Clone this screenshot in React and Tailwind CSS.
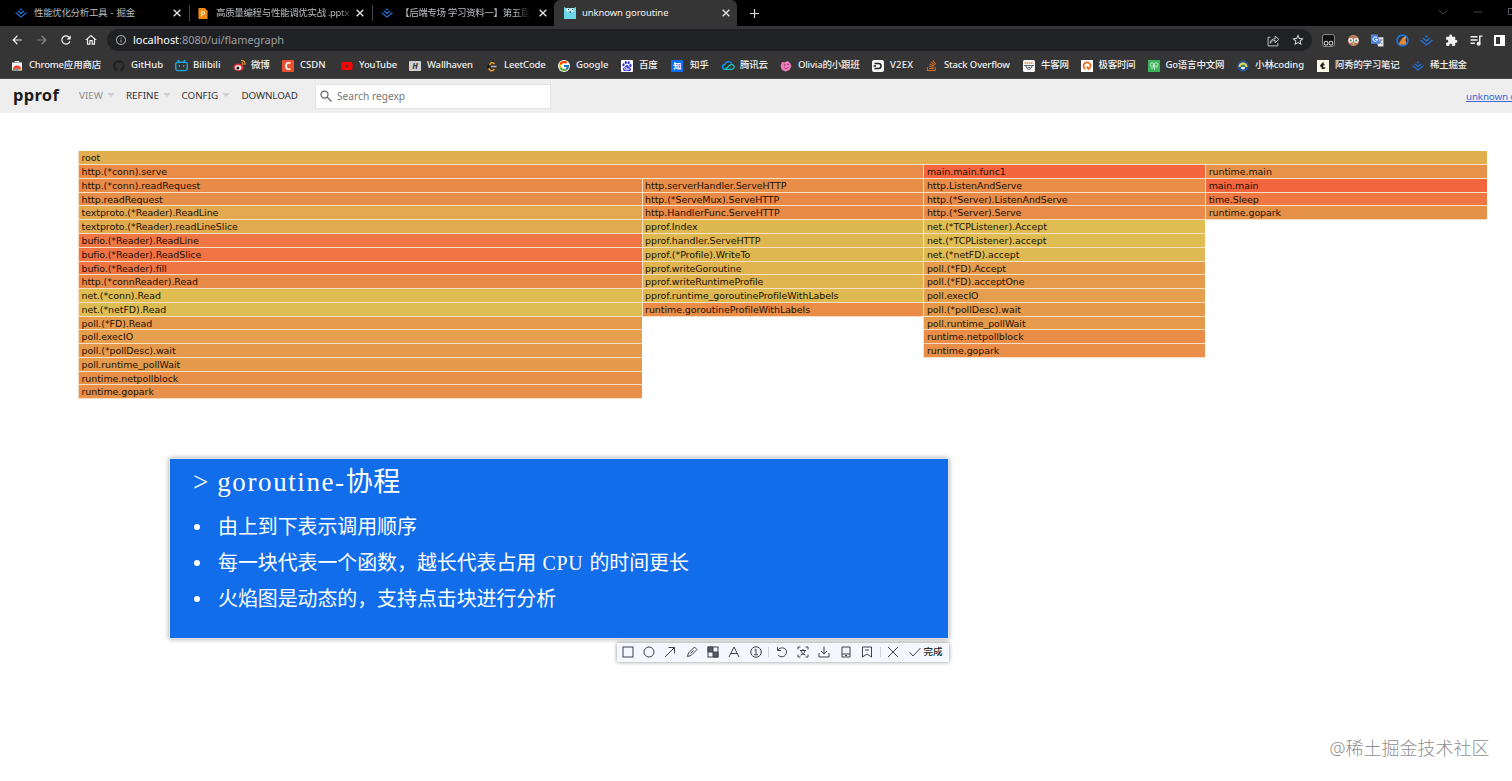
import React from "react";
import { MdArrowBack, MdArrowForward, MdExtension, MdInfoOutline, MdOutlineHome, MdRefresh, MdStarOutline } from "react-icons/md";
import { SiBaidu, SiBilibili, SiJuejin, SiStackoverflow } from "react-icons/si";
import { FaGithub, FaYoutube } from "react-icons/fa";
import { FcGoogle } from "react-icons/fc";

const Svg = ({ children, className = "size-3 shrink-0", w = 1.6 }) => (
  <svg viewBox="0 0 24 24" className={className} fill="none" stroke="currentColor" strokeWidth={w}>
    {children}
  </svg>
);

const Close = () => (
  <Svg className="size-[10px] shrink-0 text-[#e4e4e4]" w={3.2}>
    <path d="M4 4l16 16M20 4L4 20" />
  </Svg>
);

const ChromeStore = () => (
  <svg viewBox="0 0 24 24" className="size-3">
    <path d="M2 5h20v16H2z" fill="#f1f3f4" />
    <path d="M8 5V3h8v2" stroke="#f1f3f4" strokeWidth="2" fill="none" />
    <path d="M4 21a8 8 0 0 1 16 0z" fill="#fbc02d" />
    <path d="M4 19a8 8 0 0 1 16 0l-8-2z" fill="#ea4335" />
    <path d="M4 21a8 8 0 0 1 1-4l5 4z" fill="#34a853" />
    <path d="M8.5 21a3.5 3.5 0 0 1 7 0z" fill="#4285f4" />
  </svg>
);

const Weibo = () => (
  <svg viewBox="0 0 24 24" className="size-[13px]">
    <ellipse cx="10" cy="15.5" rx="9.5" ry="7" fill="#df2a2e" />
    <ellipse cx="9.5" cy="16" rx="6" ry="4.5" fill="#fff" />
    <circle cx="9" cy="16.5" r="2.8" fill="#111" />
    <path d="M15 3c5-1 8 3 7 8M16 7c2 0 3 1 2 4" stroke="#f09a22" strokeWidth="2.2" fill="none" />
  </svg>
);

const Leetcode = () => (
  <Svg className="size-3" w={3}>
    <path d="M15 2L5 12c-2 2-1 4 0 5" stroke="#111" />
    <path d="M5 17l4 4c2 1 4 1 6-1l2-2M17 8l-2-2c-2-1-4-1-5 0l-3 4" stroke="#f0a02a" />
    <path d="M10 13h11" stroke="#b5b5b5" />
  </Svg>
);

const Tencent = () => (
  <Svg className="size-[13px]" w={2.4}>
    <path d="M6 19a4.5 4.5 0 0 1-.5-9A7 7 0 0 1 18 8" stroke="#00a3ff" />
    <path d="M6 19l9-8a4.5 4.5 0 1 1 3 8z" stroke="#16c5c0" />
  </Svg>
);

const Olivia = () => (
  <svg viewBox="0 0 24 24" className="size-3">
    <path d="M4 4l5 1 6-3 5 4 3 6-4 8-8 3-7-3-3-8z" fill="#f07bbd" />
    <circle cx="9" cy="10" r="1.6" fill="#8d2f68" />
    <circle cx="16" cy="9" r="1.6" fill="#8d2f68" />
    <path d="M8 15c3 3 7 2 9-1" stroke="#8d2f68" strokeWidth="1.5" fill="none" />
  </svg>
);

const V2ex = () => (
  <svg viewBox="0 0 24 24" className="size-3">
    <rect width="24" height="24" rx="4" fill="#f4f4f4" />
    <path d="M5 7h8a5 5 0 0 1 0 10H5M3 12h5" stroke="#222" strokeWidth="3" fill="none" />
  </svg>
);

const Nowcoder = () => (
  <svg viewBox="0 0 24 24" className="size-3">
    <rect width="24" height="24" rx="3" fill="#f6f6f6" />
    <path d="M3 6h18" stroke="#e38b52" strokeWidth="3" strokeDasharray="3 1" />
    <path d="M2 11h20M6 11c0 10 12 10 12 0M9 15h6" stroke="#5b6570" strokeWidth="2" fill="none" />
  </svg>
);

const Geek = () => (
  <svg viewBox="0 0 24 24" className="size-3">
    <rect width="24" height="24" fill="#fff" />
    <path d="M9 18a7 7 0 1 1 6 0l-3-5" stroke="#f0681e" strokeWidth="3.5" fill="none" />
  </svg>
);

const GoCn = () => (
  <svg viewBox="0 0 24 24" className="size-3">
    <rect width="24" height="24" fill="#3bb45c" />
    <g stroke="#d9f5df" strokeWidth="1.6" fill="none">
      <circle cx="8" cy="9" r="3.5" />
      <circle cx="16" cy="9" r="3.5" />
      <path d="M11 9v5c0 3-5 3-6 1M13 9v11M16 14h4" />
    </g>
  </svg>
);

const Xiaolin = () => (
  <svg viewBox="0 0 24 24" className="size-3">
    <circle cx="12" cy="12" r="11.5" fill="#2a4f94" />
    <path d="M3 14a9 9 0 0 1 18 0z" fill="#e8d44a" />
    <path d="M7 14a5 5 0 0 1 10 0z" fill="#2f8a6d" />
    <path d="M8 14h8v3q-4 4-8 0z" fill="#dfe8f2" />
  </svg>
);

const Axiu = () => (
  <svg viewBox="0 0 24 24" className="size-3">
    <rect width="24" height="24" fill="#fbfae6" />
    <path d="M14 4c-5 1-8 6-8 9l3 1v3c3 3 7 1 8-2l-5-1 1-3 4-1-4-2z" fill="#222" />
  </svg>
);

function Letter({ bg, children }) {
  return (
    <span className={`flex size-3 items-center justify-center rounded-[1px] text-[10px] leading-none font-bold text-white ${bg}`}>
      {children}
    </span>
  );
}

const bookmarks = [
  { name: "Chrome应用商店", w: "w-[102px] tracking-[-0.2px]", icon: <ChromeStore /> },
  { name: "GitHub", w: "w-[62px]", icon: <FaGithub className="size-3 text-[#202225]" /> },
  { name: "Bilibili", w: "w-[58px]", icon: <SiBilibili className="size-[13px] text-[#1ba5dc]" /> },
  { name: "微博", w: "w-[49px] tracking-[-0.3px]", icon: <Weibo /> },
  { name: "CSDN", w: "w-[59px]", icon: <Letter bg="bg-[#e8502f]">C</Letter> },
  { name: "YouTube", w: "w-[68px] tracking-[-0.15px]", icon: <FaYoutube className="size-3 text-[#f00]" /> },
  { name: "Wallhaven", w: "w-[77px] tracking-[-0.15px]", icon: <Letter bg="bg-[#d0d0d0] text-[#333]! italic text-[8px]! h-[10px]!">H</Letter> },
  { name: "LeetCode", w: "w-[72px] tracking-[-0.15px]", icon: <Leetcode /> },
  { name: "Google", w: "w-[63px]", icon: <span className="flex size-3 items-center justify-center rounded-full bg-white"><FcGoogle className="size-3" /></span> },
  { name: "百度", w: "w-[50px] tracking-[-0.3px]", icon: <span className="flex size-3 items-center justify-center rounded-[1px] bg-white"><SiBaidu className="size-[10px] text-[#2a2fd6]" /></span> },
  { name: "知乎", w: "w-[51px] tracking-[-0.3px]", gap: true, icon: <Letter bg="bg-[#0b6df0] text-[8px]!">知</Letter> },
  { name: "腾讯云", w: "w-[58px] tracking-[-0.3px]", icon: <Tencent /> },
  { name: "Olivia的小跟班", w: "w-[92px] tracking-[-0.2px]", icon: <Olivia /> },
  { name: "V2EX", w: "w-[54px] tracking-[0.2px]", icon: <V2ex /> },
  { name: "Stack Overflow", w: "w-[97px] tracking-[-0.15px]", icon: <SiStackoverflow className="size-[11px] text-[#e06d20]" /> },
  { name: "牛客网", w: "w-[57.5px] tracking-[-0.3px]", icon: <Nowcoder /> },
  { name: "极客时间", w: "w-[67px] tracking-[-0.3px]", icon: <Geek /> },
  { name: "Go语言中文网", w: "w-[89.5px] tracking-[-0.2px]", icon: <GoCn /> },
  { name: "小林coding", w: "w-[80px] tracking-[-0.1px]", icon: <Xiaolin /> },
  { name: "阿秀的学习笔记", w: "w-[95px] tracking-[-0.3px]", icon: <Axiu /> },
  { name: "稀土掘金", w: "w-[70px] tracking-[-0.3px]", icon: <SiJuejin className="size-3 text-[#2272dd]" /> },
];

const TabStrip = () => (
  <div className="flex h-[26px] items-center bg-black text-[9.5px] text-[#b9bbbe]">
    <div className="flex w-[189px] items-center pr-[7px] pl-[15px]">
      <SiJuejin className="mr-[7px] size-3 text-[#2272dd]" />
      <span className="flex-1 pt-px whitespace-nowrap tracking-[-0.35px] [word-spacing:1.2px]">性能优化分析工具 - 掘金</span>
      <Close />
    </div>
    <div className="flex w-[183px] items-center border-l border-[#45464a] pr-[7px] pl-2">
      <svg viewBox="0 0 10 12" className="mr-2 h-[11px] w-[10px] shrink-0">
        <path d="M0 1q0-1 1-1h6l3 3v8q0 1-1 1H1q-1 0-1-1z" fill="#f08a12" />
        <path d="M3.500 9V4h2a1.500 1.500 0 0 1 0 3h-2" stroke="#fff" fill="none" />
      </svg>
      <span className="w-[134px] flex-1 pt-px whitespace-nowrap tracking-[-0.35px] [mask-image:linear-gradient(to_right,#000_88%,transparent)]">
        高质量编程与性能调优实战 .pptx
      </span>
      <Close />
    </div>
    <div className="flex w-[182px] items-center border-l border-[#45464a] pr-[6px] pl-2">
      <SiJuejin className="mr-[7px] size-3 shrink-0 text-[#2272dd]" />
      <span className="pt-px whitespace-nowrap tracking-[-0.35px] [mask-image:linear-gradient(to_right,#000_88%,transparent)]">
        【后端专场 学习资料一】第五届
      </span>
      <span className="ml-auto"><Close /></span>
    </div>
    <div className="flex h-full w-[183px] items-center rounded-t-md bg-[#353535] pr-[6px] pl-[10px] text-[#f2f2f2]">
      <svg viewBox="0 0 12 12" className="mr-[6px] size-3">
        <path d="M0 0l2 1h8l2-1v12H0z" fill="#6fd5e8" />
        <circle cx="4" cy="3" r="1.7" fill="#fff" />
        <circle cx="8" cy="3" r="1.7" fill="#fff" />
        <path d="M4 2.500h1M8 2.500h1M5.500 5h1.500" stroke="#222" />
      </svg>
      <span className="flex-1 pt-px tracking-[-0.1px]">unknown goroutine</span>
      <Close />
    </div>
    <Svg className="ml-[12px] size-[11px] text-[#dcdcdc]" w={2.6}>
      <path d="M12 2v20M2 12h20" />
    </Svg>
    <div className="ml-auto flex items-center pb-[3px] text-[#56575a]">
      <Svg className="mr-[25px] size-[10px]" w={2}><path d="M2 8l10 9 10-9" /></Svg>
      <Svg className="mr-[25px] size-[10px]" w={2}><path d="M2 12h20" /></Svg>
      <span className="h-[7px] w-1 rounded-l-[1px] border border-r-0 border-[#56575a]"></span>
    </div>
  </div>
);

const AddressBar = () => (
  <div className="flex h-[27px] items-center pt-px text-[#f1f1f1]">
    <div className="flex w-[107px] items-center gap-[10.5px] pl-[10px]">
      <MdArrowBack className="size-[14px] shrink-0" />
      <MdArrowForward className="size-[14px] shrink-0 text-[#858688]" />
      <MdRefresh className="size-[14px] shrink-0" />
      <MdOutlineHome className="size-[14px] shrink-0" />
    </div>
    <div className="flex h-[22px] w-[1205px] items-center rounded-full bg-[#202124] pr-[7px] pl-2 text-[11px]">
      <MdInfoOutline className="mr-[6px] size-3 text-[#a3a5a8]" />
      <span className="flex-1 tracking-[-0.05px] text-[#9c9fa3]"><span className="text-white">localhost</span>:8080/ui/flamegraph</span>
      <Svg className="mr-[11px] size-[13px] text-[#c3c4c6]" w={1.8}>
        <path d="M6 6H2v16h18v-5" />
        <path d="M6 17c0-6 4-8 9-8V4l7 6-7 6v-4c-4 0-7 1-9 5z" />
      </Svg>
      <MdStarOutline className="size-[14px] text-[#dadbdc]" />
    </div>
    <div className="flex flex-1 items-center gap-[11.6px] pl-[10px]">
      <svg viewBox="0 0 24 24" className="size-[13px] shrink-0">
        <rect x="1" y="1" width="22" height="22" rx="4" fill="#111" stroke="#a5a5a5" strokeWidth="1.5" />
        <g fill="none" stroke="#d0d0d0" strokeWidth="2">
          <circle cx="7.500" cy="17" r="3.5" />
          <circle cx="16.500" cy="17" r="3.5" />
        </g>
      </svg>
      <svg viewBox="0 0 24 24" className="size-[13px] shrink-0">
        <circle cx="12" cy="12" r="10.5" fill="#b77b60" />
        <circle cx="7" cy="12" r="4.5" fill="#efefef" />
        <circle cx="17" cy="12" r="4.5" fill="#efefef" />
        <circle cx="7" cy="12" r="2" fill="#4d8b7b" />
        <circle cx="17" cy="12" r="2" fill="#4d8b7b" />
        <path d="M10 16l2 5 2-5z" fill="#e5b83b" />
      </svg>
      <svg viewBox="0 0 24 24" className="size-[13px] shrink-0">
        <path d="M9 6h14v17H13z" fill="#e3e4e6" />
        <path d="M0 1h12l5 17H0z" fill="#4a83ec" />
        <path d="M11 7a4 4 0 1 0 1 3H8" stroke="#fff" strokeWidth="1.8" fill="none" />
        <path d="M15 11h7M18 10v2c0 3-2 5-3 6m1-5c1 3 3 4 5 5" stroke="#667" strokeWidth="1.3" fill="none" />
      </svg>
      <svg viewBox="0 0 24 24" className="size-[13px] shrink-0">
        <circle cx="12" cy="12" r="10" fill="#30343b" stroke="#1677dc" strokeWidth="3" />
        <path d="M18 3c-3 2-7 4-9 9-3 1-3 5-3 8h11c3-2 2-7 0-9 2-3 2-5 1-8z" fill="#e2883b" />
      </svg>
      <SiJuejin className="size-[13px] shrink-0 text-[#2272dd]" />
      <MdExtension className="size-[13px] shrink-0" />
      <Svg className="size-[13px] shrink-0" w={2.6}>
        <path d="M1 5h13M1 11h13M1 17h8M18 17V4h5" />
        <circle cx="16" cy="18" r="2.5" fill="currentColor" />
      </Svg>
      <span className="flex h-[11px] w-[11px] shrink-0 border-2 border-white">
        <span className="ml-auto w-[3px] bg-white"></span>
      </span>
    </div>
  </div>
);

const Bookmarks = () => (
  <div className="flex h-[26px] items-center overflow-hidden border-b border-[#4a4a4a] pl-[11px] text-[9.5px] font-medium text-[#f0f0f0]">
    {bookmarks.map((b) => (
      <div key={b.name} className={`flex shrink-0 items-center whitespace-nowrap ${b.w}`}>
        <span className="mr-[5px] flex min-w-[13px] items-center justify-start">{b.icon}</span>
        <span className={b.gap ? "pl-px" : ""}>{b.name}</span>
      </div>
    ))}
  </div>
);

const Caret = () => <span className="mb-[3px] ml-1 border-x-4 border-t-4 border-x-transparent border-t-[#cfcfcf]"></span>;

const PprofHeader = () => (
  <div className="flex h-[34px] items-center bg-[#eee] text-[9.8px] text-[#333]">
    <h1 className="w-[79px] pb-px pl-[13px] text-[16.5px] font-bold tracking-[0.3px] text-[#1c1c1c]">pprof</h1>
    <div className="flex w-[47px] items-center pt-px text-[#8c8c8c]">VIEW<Caret /></div>
    <div className="flex w-[55.5px] items-center pt-px">REFINE<Caret /></div>
    <div className="flex w-[60px] items-center pt-px">CONFIG<Caret /></div>
    <div className="w-[73.5px] pt-px tracking-[-0.1px]">DOWNLOAD</div>
    <div className="flex h-[25px] w-[236px] items-center border border-[#e2e2e2] bg-white pl-1 text-[10.2px] text-[#767676]">
      <Svg className="mr-[5px] size-3 text-[#666]" w={2.5}>
        <circle cx="9" cy="9" r="7" />
        <path d="M14 14l9 9" />
      </Svg>
      <span className="pt-px">Search regexp</span>
    </div>
    <div className="ml-auto w-[46px] overflow-hidden pt-[2px] tracking-[-0.15px] whitespace-nowrap text-[#4467d4] underline">unknown goroutine</div>
  </div>
);

const readFrames = [
  ["http.(*conn).readRequest", "bg-[#e98a48]"],
  ["http.readRequest", "bg-[#e68f4b]"],
  ["textproto.(*Reader).ReadLine", "bg-[#e2a950]"],
  ["textproto.(*Reader).readLineSlice", "bg-[#e1a950]"],
  ["bufio.(*Reader).ReadLine", "bg-[#f07646]"],
  ["bufio.(*Reader).ReadSlice", "bg-[#f17344]"],
  ["bufio.(*Reader).fill", "bg-[#f07544]"],
  ["http.(*connReader).Read", "bg-[#ea8a48]"],
  ["net.(*conn).Read", "bg-[#dfbd52]"],
  ["net.(*netFD).Read", "bg-[#dcbe55]"],
  ["poll.(*FD).Read", "bg-[#e59b4c]"],
  ["poll.execIO", "bg-[#e4a04e]"],
  ["poll.(*pollDesc).wait", "bg-[#e59a4b]"],
  ["poll.runtime_pollWait", "bg-[#e59a4b]"],
  ["runtime.netpollblock", "bg-[#e79049]"],
  ["runtime.gopark", "bg-[#e8914a]"],
];

const handlerFrames = [
  ["http.serverHandler.ServeHTTP", "bg-[#e98e49]"],
  ["http.(*ServeMux).ServeHTTP", "bg-[#e98a48]"],
  ["http.HandlerFunc.ServeHTTP", "bg-[#ea8a47]"],
  ["pprof.Index", "bg-[#deb850]"],
  ["pprof.handler.ServeHTTP", "bg-[#dfb750]"],
  ["pprof.(*Profile).WriteTo", "bg-[#deb750]"],
  ["pprof.writeGoroutine", "bg-[#e0b450]"],
  ["pprof.writeRuntimeProfile", "bg-[#e0b450]"],
  ["pprof.runtime_goroutineProfileWithLabels", "bg-[#deb850]"],
  ["runtime.goroutineProfileWithLabels", "bg-[#e98d49]"],
];

const listenFrames = [
  ["main.main.func1", "bg-[#f4663f]"],
  ["http.ListenAndServe", "bg-[#e98d49]"],
  ["http.(*Server).ListenAndServe", "bg-[#e98b48]"],
  ["http.(*Server).Serve", "bg-[#e98c49]"],
  ["net.(*TCPListener).Accept", "bg-[#dfbd53]"],
  ["net.(*TCPListener).accept", "bg-[#dfbd53]"],
  ["net.(*netFD).accept", "bg-[#deba54]"],
  ["poll.(*FD).Accept", "bg-[#e59c4c]"],
  ["poll.(*FD).acceptOne", "bg-[#e59a4c]"],
  ["poll.execIO", "bg-[#e4a04e]"],
  ["poll.(*pollDesc).wait", "bg-[#e59a4b]"],
  ["poll.runtime_pollWait", "bg-[#e59b4c]"],
  ["runtime.netpollblock", "bg-[#e98d48]"],
  ["runtime.gopark", "bg-[#e98f49]"],
];

const mainFrames = [
  ["runtime.main", "bg-[#e7914a]"],
  ["main.main", "bg-[#f2653f]"],
  ["time.Sleep", "bg-[#ee7743]"],
  ["runtime.gopark", "bg-[#e6914a]"],
];

const Frames = ({ frames }) =>
  frames.map(([name, color], i) => (
    <div
      key={i}
      className={`h-[13.77px] border-b border-l border-[#f7dfc0] pl-[2.5px] text-[9.45px] leading-[14.6px] tracking-[-0.05px] whitespace-nowrap ${color}`}
    >
      {name}
    </div>
  ));

const FlameGraph = () => (
  <div className="mt-[38.4px] ml-[78px] w-[1409px] font-['DejaVu_Sans',sans-serif] text-[#1c1206]">
    <Frames frames={[["root", "bg-[#e1ae50]"]]} />
    <div className="flex items-start">
      <div className="w-3/5">
        <Frames frames={[["http.(*conn).serve", "bg-[#ea8b48]"]]} />
        <div className="flex items-start">
          <div className="w-2/3"><Frames frames={readFrames} /></div>
          <div className="w-1/3"><Frames frames={handlerFrames} /></div>
        </div>
      </div>
      <div className="w-1/5"><Frames frames={listenFrames} /></div>
      <div className="w-1/5"><Frames frames={mainFrames} /></div>
    </div>
  </div>
);

const tools = [
  <rect x="2" y="2" width="20" height="20" />,
  <circle cx="12" cy="12" r="10" />,
  <path d="M2 22L21 3M9 3h12v12" />,
  <path d="M3 21l2-7L17 2l5 5L10 19zM9 15l6-6" />,
  <>
    <rect x="2" y="2" width="20" height="20" />
    <path d="M2 2h10v10H2zM12 12h10v10H12z" fill="#555b66" />
  </>,
  <path d="M2 22L12 2l10 20M6 15h12" />,
  <>
    <circle cx="12" cy="12" r="10.5" />
    <path d="M9 8l3-2v11M8 17.500h8" />
  </>,
];

const actions = [
  <path d="M3 2v7h7M3 9c4-8 18-7 18 3 0 9-11 13-17 6" />,
  <path d="M2 7V2h5M17 2h5v5M22 17v5h-5M7 22H2v-5M6 9h12M12 6v3M8 9c1 5 4 8 9 9M16 9c-1 5-4 8-9 9" />,
  <path d="M12 1v14M6 10l6 6 6-6M2 14v8h20v-8" />,
  <path d="M4 2h16v20H4zM4 16h16M10 19h4" />,
  <path d="M3 2h18v20l-9-6-9 6zM8 8h8" />,
];

const SlideToolbar = () => (
  <div className="mt-[5px] ml-[617px] flex h-[19px] w-[332px] items-center bg-[#f4f7fd] pb-px pl-[4.5px] text-[#3c414b] shadow-[0_0_4px_rgba(0,0,0,0.45)]">
    <div className="flex gap-[9.4px]">
      {tools.map((t, i) => <Svg key={i} w={2}>{t}</Svg>)}
    </div>
    <span className="mx-[6.5px] h-[10px] w-px bg-[#cfd4dd]"></span>
    <div className="flex gap-[9.3px]">
      {actions.map((t, i) => <Svg key={i} w={2}>{t}</Svg>)}
    </div>
    <span className="mr-[6px] ml-[6.5px] h-[10px] w-px bg-[#cfd4dd]"></span>
    <Svg className="mr-[10px] size-3" w={2}><path d="M2 2l20 20M22 2L2 22" /></Svg>
    <Svg className="mr-[3px] size-3" w={2}><path d="M1 12l7 8L23 4" /></Svg>
    <span className="text-[9.5px] font-medium whitespace-nowrap text-[#23272e]">完成</span>
  </div>
);

const Bullet = ({ children }) => (
  <li className="flex h-9 items-center">
    <span className="mr-[18px] size-[6px] rounded-full bg-white"></span>
    <span className="pt-[2px]">{children}</span>
  </li>
);

const Slide = () => (
  <div className="mt-[60px] ml-[170px] h-[179px] w-[778px] bg-[#116dea] pl-[23px] font-['Liberation_Serif','Noto_Sans_CJK_SC',serif] text-white shadow-[0_0_0_1px_#dfe3ea,0_0_5px_1px_rgba(0,0,0,0.35)]">
    <h2 className="flex h-[48px] items-center pb-[2px] text-[27px] whitespace-nowrap">
      <span className="mr-[9px]">&gt;</span>
      <span className="tracking-[1.6px]">goroutine-</span>
      <span className="tracking-[0.5px]">协程</span>
    </h2>
    <ul className="pt-[2px] pl-[1px] text-[19.9px] whitespace-nowrap">
      <Bullet>由上到下表示调用顺序</Bullet>
      <Bullet>
        每一块代表一个函数，越长代表占用<span className="mx-[0.5px] tracking-[0.7px]"> CPU </span>的时间更长
      </Bullet>
      <Bullet>火焰图是动态的，支持点击块进行分析</Bullet>
    </ul>
  </div>
);

export default function App() {
  return (
    <div className="relative h-[781px] w-[1512px] overflow-hidden bg-white font-['Noto_Sans','Noto_Sans_CJK_SC',sans-serif]">
      <div className="bg-[#353535]">
        <TabStrip />
        <AddressBar />
        <Bookmarks />
      </div>
      <PprofHeader />
      <FlameGraph />
      <Slide />
      <SlideToolbar />
      <div className="absolute right-[22.5px] bottom-5 text-[18px] leading-[26px] font-light whitespace-nowrap text-[#8f8f8f]">
        @稀土掘金技术社区
      </div>
    </div>
  );
}
